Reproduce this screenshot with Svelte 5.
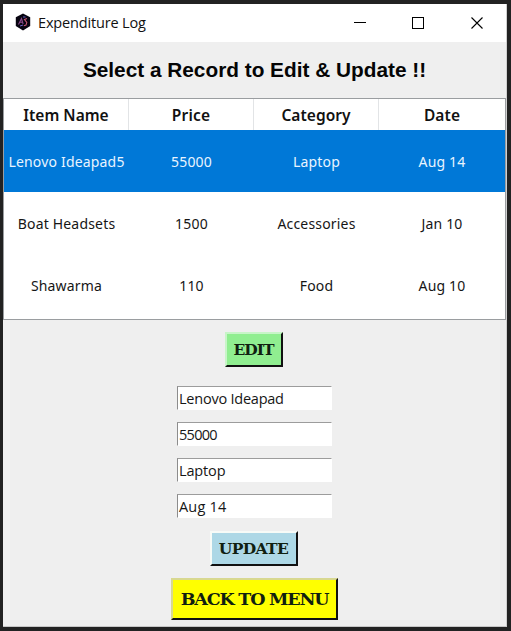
<script>
  const columns = [
    { label: 'Item Name', ls: 0 },
    { label: 'Price', ls: 0.2 },
    { label: 'Category', ls: 0.05 },
    { label: 'Date', ls: 0.1 }
  ];
  const rows = [
    ['Lenovo Ideapad5', '55000', 'Laptop', 'Aug 14'],
    ['Boat Headsets', '1500', 'Accessories', 'Jan 10'],
    ['Shawarma', '110', 'Food', 'Aug 10']
  ];
  const fields = [
    { value: 'Lenovo Ideapad', ls: -0.23 },
    { value: '55000', ls: -0.7 },
    { value: 'Laptop', ls: -0.15 },
    { value: 'Aug 14', ls: 0.2 }
  ];
</script>

<div class="desktop">
  <div class="window">
    <header class="titlebar">
      <svg class="logo" width="16" height="18" viewBox="0 0 16 18">
        <path d="M8 .5 15.2 4.3V13L8 17.5.8 13V4.3Z" fill="#070410" />
        <path d="M3.5 11.5 6.5 5.5l1.6 5.5M4.6 9.2H8" fill="none" stroke="#8a4a8c" stroke-width="1.1" />
        <path d="M12 5.5 9.5 6.5l2.3 2.8-.8 2.8-2.2.6" fill="none" stroke="#c65573" stroke-width="1.1" />
        <path d="M8 4h2.5M5 13l3-1" stroke="#6961c8" stroke-width="1" />
      </svg>
      <span class="title">Expenditure Log</span>
      <svg class="controls" width="130" height="16" viewBox="0 0 130 16" shape-rendering="crispEdges">
        <path d="M0 7.5H12" stroke="#000" />
        <rect x="58.5" y="2.5" width="11" height="11" fill="none" stroke="#000" />
        <path d="M117.5 2.5 128.5 13.5M128.5 2.5 117.5 13.5" stroke="#000" stroke-width="1.1" shape-rendering="auto" />
      </svg>
    </header>

    <h1>Select a Record to Edit &amp; Update !!</h1>

    <div class="table">
      <div class="row head">
        {#each columns as c}
          <div class="cell"><span style="letter-spacing: {c.ls}px">{c.label}</span></div>
        {/each}
      </div>
      {#each rows as row, i}
        <div class="row" class:selected={i === 0}>
          {#each row as value}
            <div class="cell"><span>{value}</span></div>
          {/each}
        </div>
      {/each}
    </div>

    <div class="form">
      <button class="edit">EDIT</button>
      <div class="fields">
        {#each fields as f}
          <div class="field"><span style="letter-spacing: {f.ls}px">{f.value}</span></div>
        {/each}
      </div>
      <button class="update">UPDATE</button>
      <button class="back">BACK TO MENU</button>
    </div>
  </div>
</div>

<style>
  :global(body) { margin: 0; background: #222; }
  .desktop {
    box-sizing: border-box;
    width: 511px;
    height: 631px;
    padding: 4px 4px 4px 3px;
    background: #222;
    overflow: hidden;
  }
  .window {
    display: flex;
    flex-direction: column;
    box-sizing: border-box;
    height: 623px;
    background: #efefef;
    border-right: 1px solid #d0d0d0;
    border-bottom: 1px solid #c6c6c6;
  }
  .titlebar {
    display: flex;
    align-items: center;
    height: 38px;
    flex: none;
    background: #fff;
  }
  .logo { margin: -2px 7px 0 12px; }
  .title {
    font: 14.5px/20px "Open Sans", sans-serif;
    letter-spacing: -0.16px;
    color: #111;
    white-space: nowrap;
  }
  .controls { margin: 0 22px 0 auto; }
  h1 {
    margin: 0;
    height: 56px;
    flex: none;
    font: bold 20.8px/56px "Liberation Sans", Arial, sans-serif;
    text-align: center;
    white-space: nowrap;
    color: #050505;
  }
  .table {
    box-sizing: border-box;
    height: 222px;
    flex: none;
    border: 1px solid #9a9da0;
    background: #fff;
    font-family: "Noto Sans", sans-serif;
  }
  .row {
    display: grid;
    grid-template-columns: 125px 125px 125px 1fr;
    height: 62px;
    color: #161616;
    font-size: 14px;
    letter-spacing: 0.18px;
  }
  .row.selected { background: #0078d7; color: #e9f4ff; }
  .cell {
    display: flex;
    align-items: center;
    justify-content: center;
    white-space: nowrap;
  }
  .row.head {
    height: 31px;
    font-size: 15.5px;
    font-weight: 600;
    color: #111;
  }
  .head .cell { box-sizing: border-box; border-right: 1px solid #e2e4e6; }
  .head .cell:last-child { border-right: 0; }
  .form {
    display: flex;
    flex-direction: column;
    align-items: center;
    padding-top: 12px;
  }
  button {
    box-sizing: border-box;
    padding: 0;
    border: 2px solid #111;
    border-top-color: #f7fbf7;
    border-left-color: #f7fbf7;
    font-family: "DejaVu Serif", serif;
    font-weight: bold;
    color: #102010;
    white-space: nowrap;
  }
  .edit { width: 58px; height: 35px; margin-right: 2px; background: #90ee90; border-top-color: #c8f5c8; border-left-color: #c8f5c8; font-size: 15.5px; letter-spacing: -1px; }
  .fields {
    display: flex;
    flex-direction: column;
    gap: 12px;
    margin-top: 19px;
  }
  .field {
    box-sizing: border-box;
    width: 155px;
    height: 24px;
    border: 1px solid #fff;
    border-top: 1px solid #9c9c9c;
    border-left: 1px solid #8c8c8c;
    background: #fff;
    padding-left: 1px;
    font: 14.5px/23px "Open Sans", sans-serif;
    color: #161616;
    white-space: nowrap;
  }
  .update { width: 88px; height: 35px; margin: 13px 2px 0 0; background: #add8e6; font-size: 15.5px; letter-spacing: -0.6px; }
  .back { width: 167px; height: 42px; margin-top: 12px; background: #ff0; border-top-color: #d8d890; border-left-color: #d8d890; font-size: 17.5px; letter-spacing: -1.2px; }
</style>
